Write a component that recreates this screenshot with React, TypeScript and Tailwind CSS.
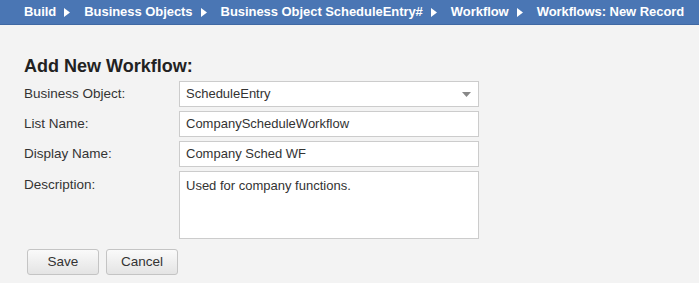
import React from "react";

function Arrow() {
  return (
    <svg width="6" height="9" viewBox="0 0 6 9" className="ml-[8px] mr-[14px] shrink-0">
      <path d="M0 0 L6 4.5 L0 9 Z" fill="#ffffff" />
    </svg>
  );
}

const crumbs = [
  "Build",
  "Business Objects",
  "Business Object ScheduleEntry#",
  "Workflow",
  "Workflows: New Record",
];

export default function App() {
  return (
    <div
      className="w-[699px] h-[283px] bg-[#f3f3f3] overflow-hidden"
      style={{ fontFamily: '"Liberation Sans", Arial, sans-serif' }}
    >
      <div className="h-[25px] bg-[#4a76b4] flex items-center pl-[24px] text-white font-bold text-[13px] tracking-[-0.05px] border-b border-[#3f68a3]">
        {crumbs.map((c, i) => (
          <React.Fragment key={c}>
            <span className="whitespace-nowrap">{c}</span>
            {i < crumbs.length - 1 && <Arrow />}
          </React.Fragment>
        ))}
      </div>
      <div className="pl-[24px] pt-[31px]">
        <h1 className="text-[18px] font-bold text-[#222] leading-[20px]">Add New Workflow:</h1>
        <div className="mt-[5px] flex flex-col gap-[4px]">
          <div className="flex items-center">
            <label className="w-[155px] text-[13.5px] text-[#333]">Business Object:</label>
            <div className="w-[300px] h-[26px] bg-white border border-[#cccccc] flex items-center pl-[6px] pr-[7px] text-[13px] text-[#333] justify-between">
              <span>ScheduleEntry</span>
              <svg width="9" height="5" viewBox="0 0 9 5">
                <path d="M0 0 L9 0 L4.5 5 Z" fill="#888888" />
              </svg>
            </div>
          </div>
          <div className="flex items-center">
            <label className="w-[155px] text-[13.5px] text-[#333]">List Name:</label>
            <div className="w-[300px] h-[26px] bg-white border border-[#cccccc] flex items-center pl-[6px] text-[13px] text-[#333]">
              CompanyScheduleWorkflow
            </div>
          </div>
          <div className="flex items-center">
            <label className="w-[155px] text-[13.5px] text-[#333]">Display Name:</label>
            <div className="w-[300px] h-[26px] bg-white border border-[#cccccc] flex items-center pl-[6px] text-[13px] text-[#333]">
              Company Sched WF
            </div>
          </div>
          <div className="flex items-start">
            <label className="w-[155px] text-[13.5px] text-[#333] pt-[4px]">Description:</label>
            <div className="w-[300px] h-[68px] bg-white border border-[#cccccc] pl-[6px] pt-[4px] text-[13px] text-[#333]">
              Used for company functions.
            </div>
          </div>
        </div>
        <div className="mt-[10px] ml-[3px] flex gap-[7px]">
          <button className="w-[72px] h-[26px] rounded-[3px] border border-[#c4c4c4] bg-gradient-to-b from-[#fafafa] to-[#e4e4e4] text-[13.5px] text-[#333]">
            Save
          </button>
          <button className="w-[72px] h-[26px] rounded-[3px] border border-[#c4c4c4] bg-gradient-to-b from-[#fafafa] to-[#e4e4e4] text-[13.5px] text-[#333]">
            Cancel
          </button>
        </div>
      </div>
    </div>
  );
}
